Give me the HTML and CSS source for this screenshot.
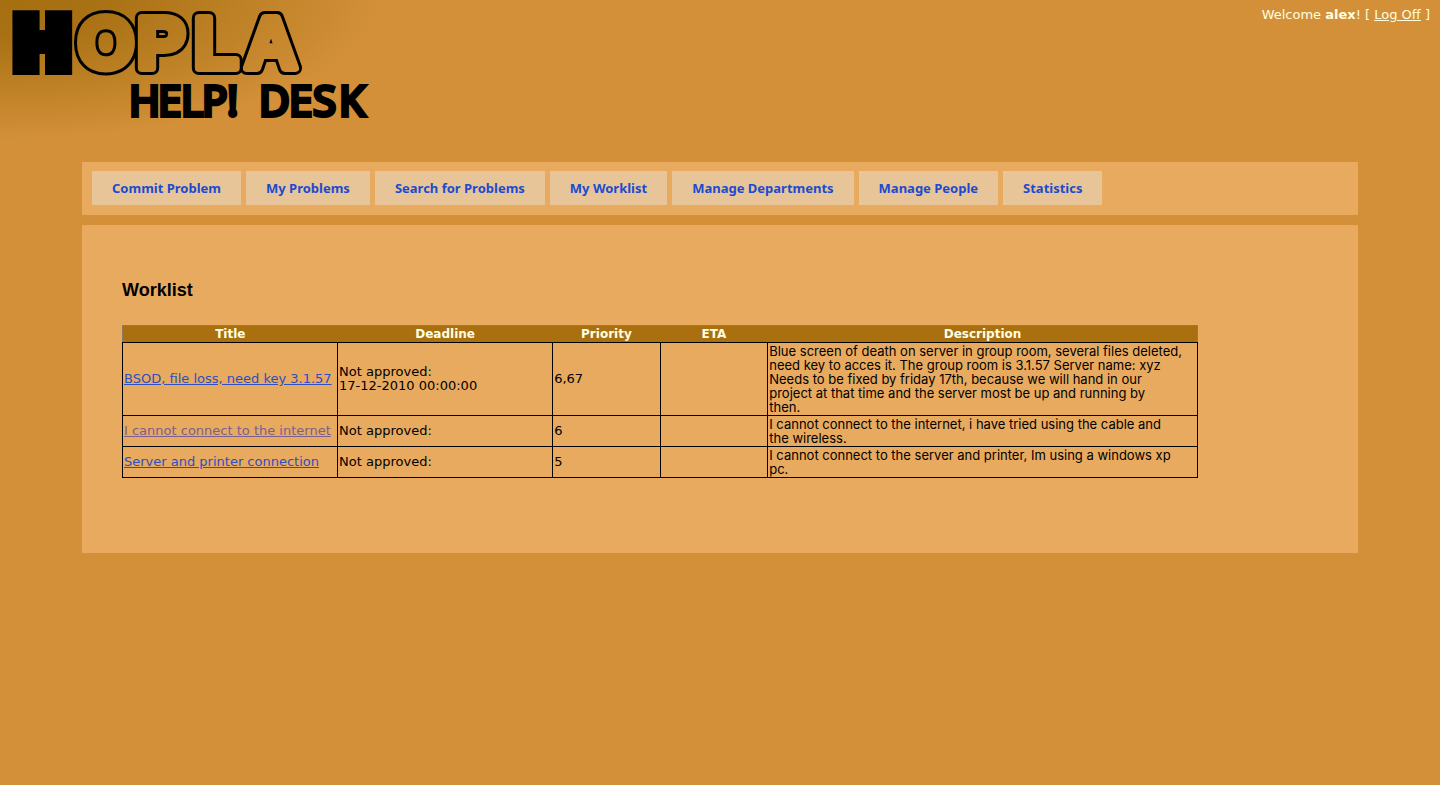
FILE: index.html
```html
<!DOCTYPE html>
<html lang="en">
<head>
<meta charset="utf-8">
<title>Hopla Help! Desk - Worklist</title>
<link rel="stylesheet" href="styles.css">
</head>
<body>
<header class="header">
  <svg class="logo" viewBox="0 0 380 130" role="img" aria-label="Hopla Help! Desk">
    <defs>
      <mask id="hollow" maskUnits="userSpaceOnUse" x="0" y="0" width="380" height="130">
        <rect width="380" height="130" fill="#fff"/>
        <use href="#opla" fill="#000" stroke="#000" stroke-width="8"/>
      </mask>
      <text id="opla" class="logo-big" x="78 137 194 245" y="68">OPLA</text>
    </defs>
    <text class="logo-solid" x="13" y="68">H</text>
    <g mask="url(#hollow)"><use href="#opla" fill="#000" stroke="#000" stroke-width="14"/></g>
    <text class="logo-small" x="129 158 181 202 227" y="116">HELP!</text>
    <text class="logo-small" x="259 289 313 339" y="116">DESK</text>
  </svg>
  <div class="login">Welcome <b>alex</b>! [ <a href="#">Log Off</a> ]</div>
</header>
<nav class="menu">
  <a href="#">Commit Problem</a>
  <a href="#">My Problems</a>
  <a href="#">Search for Problems</a>
  <a href="#">My Worklist</a>
  <a href="#">Manage Departments</a>
  <a href="#">Manage People</a>
  <a href="#">Statistics</a>
</nav>
<main class="content">
  <h1>Worklist</h1>
  <table class="worklist">
    <colgroup><col class="wide"><col class="wide"><col class="slim"><col class="slim"><col></colgroup>
    <thead>
      <tr><th>Title</th><th>Deadline</th><th>Priority</th><th>ETA</th><th>Description</th></tr>
    </thead>
    <tbody>
      <tr>
        <td><a href="#">BSOD, file loss, need key 3.1.57</a></td>
        <td>Not approved:<br>17-12-2010 00:00:00</td>
        <td>6,67</td><td></td>
        <td class="description">Blue screen of death on server in group room, several files deleted,<br>need key to acces it. The group room is 3.1.57 Server name: xyz<br>Needs to be fixed by friday 17th, because we will hand in our<br>project at that time and the server most be up and running by<br>then.</td>
      </tr>
      <tr>
        <td><a class="seen" href="#">I cannot connect to the internet</a></td>
        <td>Not approved:</td>
        <td>6</td><td></td>
        <td class="description">I cannot connect to the internet, i have tried using the cable and<br>the wireless.</td>
      </tr>
      <tr>
        <td><a href="#">Server and printer connection</a></td>
        <td>Not approved:</td>
        <td>5</td><td></td>
        <td class="description">I cannot connect to the server and printer, Im using a windows xp<br>pc.</td>
      </tr>
    </tbody>
  </table>
</main>
</body>
</html>
```
FILE: styles.css
```css
body {
  margin: 0;
  background: radial-gradient(ellipse 380px 140px at 0 0, #a67010 0%, #a87113 25%, #d39038 100%) no-repeat #d39038;
  font: 13px/14px Verdana, "DejaVu Sans", sans-serif;
  color: #000;
}
.header {
  display: flex;
  justify-content: space-between;
  align-items: flex-start;
  min-height: 162px;
}
.logo { width: 380px; height: 130px; }
.logo-big {
  font: bold 72px "Liberation Sans", Arial, sans-serif;
  stroke-linejoin: round;
}
.logo-solid {
  font: bold 70px "DejaVu Sans", sans-serif;
  stroke: #000;
  stroke-width: 14px;
}
.logo-small {
  font: 42px "Noto Sans", sans-serif;
  stroke: #000;
  stroke-width: 4px;
}
.login { padding: 8px 10px 0 0; color: #ffffe0; }
.login a { color: inherit; }
.menu {
  display: flex;
  flex-wrap: wrap;
  gap: 5px;
  margin: 0 82px 10px;
  padding: 9px 10px 10px;
  background: #e8aa5f;
}
.menu a {
  padding: 10px 20px;
  background: #e8c598;
  color: #1a4bd0;
  font-family: "Noto Sans", sans-serif;
  font-weight: bold;
  text-decoration: none;
}
.content {
  margin: 0 82px;
  padding: 55px 40px 75px;
  background: #e8aa5f;
}
h1 {
  margin: 0 0 25px;
  font: bold 18px/20px "Liberation Sans", Arial, sans-serif;
}
.worklist {
  width: 90%;
  table-layout: fixed;
  border-collapse: collapse;
}
.wide { width: 20%; }
.slim { width: 10%; }
.worklist th {
  padding: 1px;
  background: #aa6f0f;
  color: #ffffe0;
  font-size: 12px;
}
.worklist thead { border: 1px solid #8c7a5c; }
.worklist td { padding: 1px; border: 1px solid #000; }
.worklist .description { font-family: Inter, sans-serif; }
.worklist a { color: #2d4fc0; }
.worklist a.seen { color: #7a5f90; }
```
